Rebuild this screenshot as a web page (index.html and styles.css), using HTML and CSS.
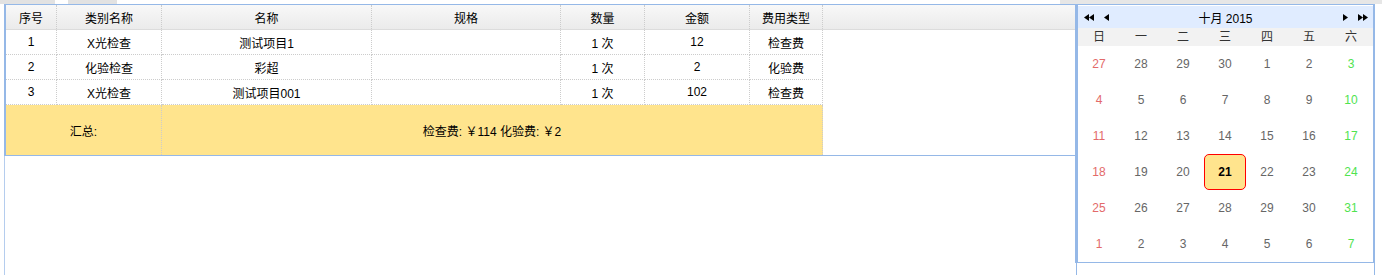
FILE: index.html
```html
<!DOCTYPE html>
<html lang="zh-CN">
<head>
  <meta charset="UTF-8" />
  <title>费用明细</title>
  <link rel="stylesheet" href="styles.css">
</head>
<body>
  <!-- cut-off toolbar above the panels -->
  <div class="toolbar">
    <span class="tool-btn"></span>
    <span class="tool-btn second"></span>
    <span class="toolbar-fill"></span>
  </div>

  <div class="layout">
    <div class="main">
      <div class="grid-panel">
        <div class="grid-header">
          <table class="grid">
            <colgroup>
              <col style="width:51px"><col style="width:105px"><col style="width:210px"><col style="width:189px">
              <col style="width:84px"><col style="width:105px"><col style="width:73px">
            </colgroup>
            <tr>
              <th>序号</th><th>类别名称</th><th>名称</th><th>规格</th><th>数量</th><th>金额</th><th>费用类型</th>
            </tr>
          </table>
        </div>
        <div class="grid-body">
          <table class="grid">
            <colgroup>
              <col style="width:51px"><col style="width:105px"><col style="width:210px"><col style="width:189px">
              <col style="width:84px"><col style="width:105px"><col style="width:73px">
            </colgroup>
            <tr>
              <td>1</td><td>X光检查</td><td>测试项目1</td><td></td><td>1 次</td><td>12</td><td>检查费</td>
            </tr>
            <tr>
              <td>2</td><td>化验检查</td><td>彩超</td><td></td><td>1 次</td><td>2</td><td>化验费</td>
            </tr>
            <tr>
              <td>3</td><td>X光检查</td><td>测试项目001</td><td></td><td>1 次</td><td>102</td><td>检查费</td>
            </tr>
            <tr class="summary">
              <td colspan="2">汇总:</td>
              <td colspan="5">检查费: ￥114 化验费: ￥2</td>
            </tr>
          </table>
        </div>
      </div>
      <div class="main-rest"></div>
    </div>

    <div class="side">
      <div class="calendar">
        <div class="cal-head">
          <div class="cal-nav left">
            <svg width="10" height="7" viewBox="0 0 10 7"><polygon points="5,0 5,7 0,3.5" /><polygon points="10,0 10,7 5,3.5" /></svg>
            <svg width="5" height="7" viewBox="0 0 5 7"><polygon points="5,0 5,7 0,3.5" /></svg>
          </div>
          <div class="cal-title">十月 2015</div>
          <div class="cal-nav right">
            <svg width="5" height="7" viewBox="0 0 5 7"><polygon points="0,0 0,7 5,3.5" /></svg>
            <svg width="10" height="7" viewBox="0 0 10 7"><polygon points="0,0 0,7 5,3.5" /><polygon points="5,0 5,7 10,3.5" /></svg>
          </div>
        </div>
        <div class="cal-week">
          <span>日</span><span>一</span><span>二</span><span>三</span><span>四</span><span>五</span><span>六</span>
        </div>
        <div class="cal-days">
          <span class="day sun">27</span><span class="day">28</span><span class="day">29</span><span class="day">30</span><span class="day">1</span><span class="day">2</span><span class="day sat">3</span>
          <span class="day sun">4</span><span class="day">5</span><span class="day">6</span><span class="day">7</span><span class="day">8</span><span class="day">9</span><span class="day sat">10</span>
          <span class="day sun">11</span><span class="day">12</span><span class="day">13</span><span class="day">14</span><span class="day">15</span><span class="day">16</span><span class="day sat">17</span>
          <span class="day sun">18</span><span class="day">19</span><span class="day">20</span><span class="day today">21</span><span class="day">22</span><span class="day">23</span><span class="day sat">24</span>
          <span class="day sun">25</span><span class="day">26</span><span class="day">27</span><span class="day">28</span><span class="day">29</span><span class="day">30</span><span class="day sat">31</span>
          <span class="day sun">1</span><span class="day">2</span><span class="day">3</span><span class="day">4</span><span class="day">5</span><span class="day">6</span><span class="day sat">7</span>
        </div>
      </div>
      <div class="side-rest"></div>
    </div>
  </div>
</body>
</html>
```

FILE: styles.css
```css
body {
  margin: 0;
  background: #fff;
  color: #000;
  font-family: "Liberation Sans", "Noto Sans CJK SC", sans-serif;
  font-size: 12px;
  overflow: hidden;
}

/* top toolbar, only its bottom edge is visible */
.toolbar {
  display: flex;
  height: 4px;
}

.tool-btn {
  width: 55px;
  background: #e2e2e2;
}

.tool-btn.second {
  width: 49px;
  margin-left: 13px;
}

.toolbar-fill {
  margin-left: auto;
  width: 322px;
  background: #e6e6e6;
}

.layout {
  display: flex;
  height: 271px;
}

/* datagrid */
.main {
  width: 1071px;
  margin-left: 4px;
  display: flex;
  flex-direction: column;
}

.grid-panel {
  border: 1px solid #95b8e7;
  border-left-width: 2px;
  border-right: 0;
}

.grid-header {
  background: linear-gradient(#f8f8f8, #ebebeb);
  border-bottom: 1px solid #dcdcdc;
}

table.grid {
  border-collapse: separate;
  border-spacing: 0;
  table-layout: fixed;
  width: 817px;
}

.grid th,
.grid td {
  box-sizing: border-box;
  padding: 0 4px;
  border-right: 1px dotted #ccc;
  text-align: center;
  white-space: nowrap;
  overflow: hidden;
  font-weight: normal;
}

.grid th {
  height: 24px;
}

.grid td {
  height: 25px;
  border-bottom: 1px dotted #ccc;
}

.grid tr.summary td {
  height: 50px;
  background: #ffe48d;
  border-bottom: 0;
}

.main-rest {
  flex: 1;
  border-left: 1px solid #b5cdee;
}

/* calendar */
.side {
  width: 300px;
  display: flex;
  flex-direction: column;
}

.calendar {
  border: 1px solid #95b8e7;
  border-left-width: 3px;
  border-right-width: 2px;
  padding-top: 1px;
}

.cal-head {
  display: grid;
  grid-template-columns: 1fr auto 1fr;
  align-items: center;
  height: 22px;
  background: #e0ecff;
}

.cal-nav {
  display: flex;
  align-items: center;
  gap: 10px;
}

.cal-nav.left {
  padding-left: 6px;
}

.cal-nav.right {
  justify-content: flex-end;
  padding-right: 5px;
}

.cal-nav svg {
  fill: #000;
}

.cal-title {
  font-size: 12px;
}

.cal-week,
.cal-days {
  display: grid;
  grid-template-columns: repeat(7, 42px);
}

.cal-week {
  height: 18px;
  line-height: 18px;
  background: #f2f2f2;
  color: #333;
  text-align: center;
}

.cal-days {
  grid-auto-rows: 36px;
}

.day {
  display: flex;
  align-items: center;
  justify-content: center;
  color: #666;
}

.day.sun {
  color: #e36a6a;
}

.day.sat {
  color: #4fe34f;
}

.day.today {
  background: #ffe48d;
  border: 1px solid #f00;
  border-radius: 5px;
  color: #000;
  font-weight: bold;
}

.side-rest {
  flex: 1;
  margin-left: 1px;
  border-left: 1px solid #95b8e7;
  border-right: 1px solid #95b8e7;
}
```
